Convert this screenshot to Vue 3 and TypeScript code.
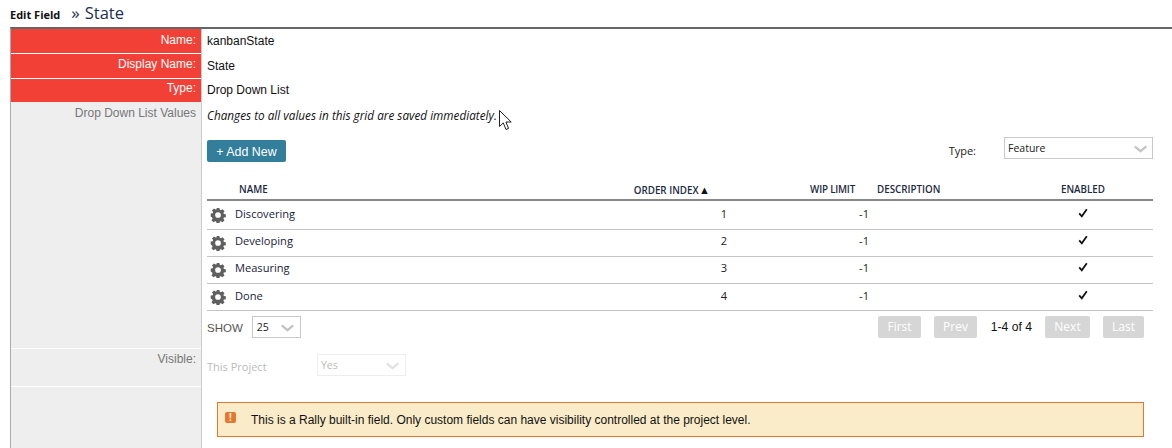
<script setup lang="ts">
interface Row { name: string; order: number; wip: number }
const rows: Row[] = [
  { name: 'Discovering', order: 1, wip: -1 },
  { name: 'Developing', order: 2, wip: -1 },
  { name: 'Measuring', order: 3, wip: -1 },
  { name: 'Done', order: 4, wip: -1 },
]
const gear = 'M6.4 0h3.200l.4 2.200 1.300.5 1.800-1.300 2.300 2.300-1.300 1.800.5 1.300 2.200.4v3.200l-2.200.4-.5 1.300 1.300 1.800-2.300 2.300-1.800-1.300-1.300.5-.4 2.200H6.400l-.4-2.200-1.300-.5-1.800 1.300-2.300-2.300 1.300-1.800-.5-1.300L-.2 9.600V6.400l2.200-.4.5-1.300-1.300-1.800 2.300-2.300 1.800 1.300 1.300-.5z'
</script>

<template>
  <div class="page">
    <header class="title">
      <span class="edit">Edit Field</span>
      <span class="arrows">»</span>
      <span class="state">State</span>
    </header>
    <div class="form">
      <div class="row r-name">
        <div class="label red">Name:</div>
        <div class="value">kanbanState</div>
      </div>
      <div class="row r-display">
        <div class="label red">Display Name:</div>
        <div class="value">State</div>
      </div>
      <div class="row r-type">
        <div class="label red">Type:</div>
        <div class="value">Drop Down List</div>
      </div>
      <div class="row r-values">
        <div class="label">Drop Down List Values</div>
        <div class="panel">
          <p class="note">Changes to all values in this grid are saved immediately.</p>
          <div class="toolbar">
            <button class="add">+ Add New</button>
            <div class="type-filter">
              <span class="type-label">Type:</span>
              <div class="select wide">
                <span>Feature</span>
                <svg class="chev" viewBox="0 0 16 9"><path d="M1.500 1.500 8 7l6.500-5.500" /></svg>
              </div>
            </div>
          </div>
          <div class="grid-row head">
            <span class="h-name">NAME</span>
            <span class="h-order">ORDER INDEX <i class="sort">▲</i></span>
            <span class="h-wip">WIP LIMIT</span>
            <span class="h-desc">DESCRIPTION</span>
            <span class="h-en">ENABLED</span>
          </div>
          <div v-for="r in rows" :key="r.name" class="grid-row item">
            <span class="cell-name">
              <svg class="gear" viewBox="-1 -1 18 18">
                <path :d="gear" fill="#5f5f5f" />
                <circle cx="8" cy="8" r="3.200" fill="#fff" />
              </svg>
              {{ r.name }}
            </span>
            <span class="cell-num">{{ r.order }}</span>
            <span class="cell-num">{{ r.wip }}</span>
            <span></span>
            <span class="cell-en">
              <svg class="check" viewBox="0 0 10 10"><path d="M1.200 5.400 3.800 8.300 8.800 1.200" /></svg>
            </span>
          </div>
          <div class="pager">
            <div class="show">
              <span class="show-label">SHOW</span>
              <div class="select small">
                <span>25</span>
                <svg class="chev" viewBox="0 0 16 9"><path d="M1.500 1.500 8 7l6.500-5.500" /></svg>
              </div>
            </div>
            <div class="pages">
              <span class="pg first">First</span>
              <span class="pg prev">Prev</span>
              <span class="count">1-4 of 4</span>
              <span class="pg next">Next</span>
              <span class="pg last">Last</span>
            </div>
          </div>
        </div>
      </div>
      <div class="row r-visible">
        <div class="label">Visible:</div>
        <div class="vis">
          <span class="vis-label">This Project</span>
          <div class="select disabled">
            <span>Yes</span>
            <svg class="chev" viewBox="0 0 16 9"><path d="M1.500 1.500 8 7l6.500-5.500" /></svg>
          </div>
        </div>
      </div>
      <div class="row r-last">
        <div class="label"></div>
        <div class="alert-wrap">
          <div class="alert">
            <span class="bang">!</span>
            <span>This is a Rally built-in field. Only custom fields can have visibility controlled at the project level.</span>
          </div>
        </div>
      </div>
    </div>
    <svg class="cursor" viewBox="0 0 14 21">
      <path d="M.5.500v16l3.800-3.600 2.700 6.600 2.600-1.100-2.700-6.400h5.300z" fill="#fff" stroke="#222" stroke-width="1" />
    </svg>
  </div>
</template>

<style>
html, body { margin: 0; padding: 0; background: #fff; }
</style>

<style scoped>
.page {
  position: relative;
  width: 1172px;
  height: 448px;
  overflow: hidden;
  background: #fff;
  font-family: "Liberation Sans", Arial, sans-serif;
  font-size: 12px;
  color: #111;
}
.title {
  height: 27px;
  margin-left: 10px;
  display: flex;
  align-items: center;
  font-family: "Open Sans", sans-serif;
  color: #1c3050;
}
.edit { font-size: 11px; font-weight: 700; color: #111; margin-top: 1px; }
.arrows { font-size: 17px; margin-left: 11px; margin-top: -2px; }
.state { font-size: 16.500px; margin-left: 5px; margin-top: -2px; }
.form {
  margin-left: 10px;
  border-top: 2px solid #666;
  border-left: 1px solid #aaa;
  height: 419px;
  display: flex;
  flex-direction: column;
}
.row { display: flex; }
.r-name, .r-display { height: 25px; }
.r-type { height: 23px; }
.r-values { height: 247px; }
.r-visible { height: 38px; }
.r-last { flex: 1; }
.label {
  width: 190px;
  flex: none;
  box-sizing: border-box;
  padding: 4px 5px 0 0;
  text-align: right;
  background: #eee;
  color: #777;
  line-height: 14px;
}
.label.red { background: #f24037; color: #fff; }
.r-name .label, .r-display .label, .r-values .label, .r-visible .label { border-bottom: 1px solid #fff; }
.r-display .label, .r-visible .label { padding-top: 3px; }
.r-type .label { padding-top: 2px; }
.value, .panel, .vis, .alert-wrap { flex: 1; border-left: 1px solid #ccc; padding-left: 5px; }
.value { padding-top: 5px; line-height: 14px; }
.r-type .value { padding-top: 4px; }
.panel { width: 0; }
.note {
  margin: 6px 0 0;
  font-family: "Open Sans", sans-serif;
  font-style: italic;
  font-size: 11.750px;
  line-height: 15px;
  color: #111;
}
.toolbar {
  display: flex;
  justify-content: space-between;
  align-items: flex-start;
  width: 946px;
  margin-top: 14px;
  height: 37px;
}
.add {
  width: 79px;
  height: 22px;
  margin-top: 3px;
  padding: 2px 0 0;
  border: 0;
  border-radius: 2px;
  background: #337e9b;
  color: #fff;
  font: 12.400px "Liberation Sans", Arial, sans-serif;
}
.type-filter { display: flex; align-items: flex-start; }
.type-label { font-family: "Open Sans", sans-serif; font-size: 11px; line-height: 15px; margin: 6px 28px 0 0; color: #222; }
.select {
  box-sizing: border-box;
  display: flex;
  justify-content: space-between;
  align-items: center;
  border: 1px solid #c8c8c8;
  font-family: "Open Sans", sans-serif;
  font-size: 10.500px;
  color: #222;
  background: #fff;
}
.select.wide { width: 149px; height: 22px; padding: 0 3px; }
.select.small { width: 49px; height: 22px; padding: 0 4px; }
.select.disabled { width: 89px; height: 22px; padding: 0 4px 0 3px; border-color: #eee; color: #bbb; }
.chev { width: 15px; height: 8px; margin-right: 1px; margin-top: 2px; }
.chev path { fill: none; stroke: #c4c4c4; stroke-width: 2.500; }
.disabled .chev path { stroke: #e2e2e2; }
.grid-row {
  display: grid;
  grid-template-columns: 400px 120px 142px 144px 140px;
  width: 946px;
}
.head {
  height: 27px;
  box-sizing: border-box;
  padding-top: 10px;
  border-bottom: 2px solid #888;
  font-family: "Open Sans", sans-serif;
  font-size: 9.800px;
  font-weight: 600;
  line-height: 12px;
  color: #1c2a40;
}
.h-name { padding-left: 32px; }
.h-order { justify-self: end; padding-right: 17px; white-space: nowrap; }
.h-wip { text-align: right; padding-right: 14px; letter-spacing: -0.2px; }
.h-desc { padding-left: 8px; }
.h-en { text-align: center; }
.sort { font-style: normal; font-size: 11px; color: #111; margin-left: -2px; }
.item {
  height: 27px;
  box-sizing: border-box;
  border-bottom: 1px solid #c4c4c4;
  font-family: "Open Sans", sans-serif;
  font-size: 11.100px;
  line-height: 22px;
  color: #1a1a3a;
}
.head + .item { height: 29px; line-height: 26px; }
.item:has(+ .pager) { line-height: 24px; }
.cell-name { display: flex; align-items: center; align-self: start; }
.gear { width: 16px; height: 16px; margin: 3px 9px 0 3px; flex: none; }
.head + .item .gear { margin-top: 2px; }
.item:has(+ .pager) .gear { margin-top: 2px; }
.cell-num { text-align: right; color: #222; }
.cell-en { display: flex; align-items: center; justify-content: center; }
.check { width: 10px; height: 10px; margin-bottom: 7px; }
.head + .item .check, .item:has(+ .pager) .check { margin-bottom: 5px; }
.check path { fill: none; stroke: #111; stroke-width: 1.800; }
.pager {
  display: flex;
  justify-content: space-between;
  align-items: center;
  width: 937px;
  margin-top: 5px;
  height: 22px;
}
.show { display: flex; align-items: center; gap: 9px; font-size: 11.500px; color: #555; }
.show-label { margin-top: 2px; }
.pages { display: flex; align-items: center; }
.pg {
  box-sizing: border-box;
  height: 22px;
  background: #d6d6d6;
  border-radius: 2px;
  color: #fff;
  font-family: "Open Sans", sans-serif;
  font-size: 12px;
  line-height: 22px;
  text-align: center;
}
.first, .prev { width: 43px; }
.next { width: 45px; }
.last { width: 41px; }
.prev, .last { margin-left: 13px; }
.count { width: 55px; padding-right: 13px; text-align: right; color: #111; font-size: 12.200px; }
.vis { display: flex; align-items: flex-start; }
.vis-label { width: 110px; margin-top: 10px; font-family: "Open Sans", sans-serif; font-size: 11px; color: #bbb; }
.vis .select { margin-top: 5px; }
.alert-wrap { padding: 15px 28px 0 15px; }
.alert {
  box-sizing: border-box;
  height: 35px;
  border: 1px solid #e5772f;
  background: #faecc8;
  display: flex;
  align-items: center;
  padding-left: 7px;
  color: #111;
}
.bang {
  width: 11px;
  height: 11px;
  border-radius: 2px;
  background: #e5772f;
  color: #fff;
  font: bold 10px/11px "Liberation Sans", sans-serif;
  text-align: center;
  margin-right: 15px;
  margin-top: -4px;
}
.cursor { position: absolute; left: 499px; top: 110px; width: 14px; height: 21px; }
</style>
